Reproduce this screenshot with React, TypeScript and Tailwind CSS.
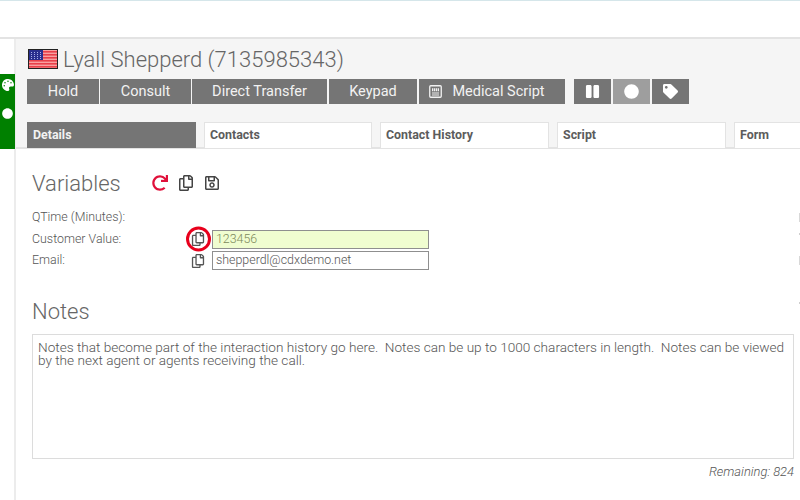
import { FaCircle, FaPalette, FaPause, FaRedo, FaRegCopy, FaRegSave, FaTag } from "react-icons/fa";

function Flag() {
  return (
    <svg width="30" height="20" viewBox="0 0 30 20" className="ml-[1px] shrink-0">
      <rect x="0.5" y="0.5" width="29" height="19" fill="#fff" stroke="#222" />
      <rect x="1" y="1" width="28" height="18" fill="#f8a0a0" />
      {[2, 5, 8, 11, 14, 17].map((y) => (
        <rect key={y} x="1" y={y} width="28" height="1.6" fill="#e8404a" />
      ))}
      <rect x="1" y="1" width="14" height="10" fill="#2a2f8f" />
      {[3, 5, 7, 9].map((y) =>
        [3, 6, 9, 12].map((x) => <rect key={`${x}-${y}`} x={x} y={y} width="1" height="1" fill="#aab0e8" />)
      )}
    </svg>
  );
}

function ScriptIcon() {
  return (
    <svg width="13" height="13" viewBox="0 0 13 13" fill="none" stroke="#f2f2f2" className="shrink-0">
      <rect x="0.75" y="0.75" width="11.5" height="11.5" rx="1" strokeWidth="1.3" />
      <path d="M3 4h7M3 5.5h7" strokeWidth="1.4" strokeDasharray="1.4 0.6" />
      <path d="M3 8h7M3 10h7" strokeWidth="1" />
    </svg>
  );
}

function ActionButton({ label, width, icon }: { label: string; width: string; icon?: boolean }) {
  return (
    <button className={`${width} flex h-[25px] shrink-0 items-center justify-center gap-[10px] bg-[#757575] text-[14.5px] text-[#f2f2f2]`}>
      {icon && <ScriptIcon />}
      {label}
    </button>
  );
}

function Tab({ label, width, active }: { label: string; width: string; active?: boolean }) {
  return (
    <div
      className={`${width} flex h-[26px] shrink-0 items-center text-[12.4px] font-bold ${
        active ? "bg-[#757575] px-[6px] text-[#f2f2f2]" : "border border-b-0 border-[#e3e3e3] bg-white px-[5px] text-[#5c5c5c]"
      }`}
    >
      {label}
    </div>
  );
}

function VarRow({ label, value, highlight, circled }: { label: string; value?: string; highlight?: boolean; circled?: boolean }) {
  return (
    <div className="flex h-[21.5px] items-center text-[12.4px] font-light text-[#555]">
      <span className="w-[155px]">{label}</span>
      {value && (
        <>
          <span className="relative flex w-[25px] justify-center pr-[4px] text-[14px] text-[#555]">
            <FaRegCopy />
            {circled && (
              <span className="absolute top-1/2 left-[-1.5px] h-[25px] w-[25px] -translate-y-1/2 rounded-full border-[3px] border-[#e8001c]" />
            )}
          </span>
          <div
            className={`flex h-[19px] w-[217px] items-center border border-[#8f8f8f] px-[3px] ${
              highlight ? "bg-[#f0fdd0] text-[#7d8a5c]" : "bg-white text-[#555]"
            }`}
          >
            {value}
          </div>
        </>
      )}
    </div>
  );
}

export default function App() {
  return (
    <div className="relative flex h-[500px] w-[800px] flex-col overflow-hidden bg-white font-['Roboto',sans-serif]">
      <div className="h-[39px] shrink-0 border-t border-b-2 border-t-[#d5e6ea] border-b-[#e3e3e3]" />
      <div className="flex min-h-0 flex-1">
        <div className="w-[16px] shrink-0 border-r-2 border-[#ececec]">
          <div className="mt-[35px] flex h-[75px] w-[15px] flex-col items-center gap-[17px] bg-[#008000] pt-[5px] text-white">
            <FaPalette className="text-[12px]" />
            <FaCircle className="text-[11px]" />
          </div>
        </div>
        <div className="min-w-0 flex-1">
          <div className="h-[110px] border-b-2 border-[#e3e3e3] bg-[#f5f5f5] pl-[11px]">
            <div className="flex h-[40px] items-center gap-[5px]">
              <Flag />
              <h1 className="text-[22px] font-light whitespace-nowrap text-[#666]">Lyall Shepperd (7135985343)</h1>
            </div>
            <div className="flex gap-[1px]">
              <ActionButton label="Hold" width="w-[72px]" />
              <ActionButton label="Consult" width="w-[91px]" />
              <ActionButton label="Direct Transfer" width="w-[135px]" />
              <ActionButton label="Keypad" width="ml-[1px] w-[88px]" />
              <ActionButton label="Medical Script" width="ml-[1px] w-[146px] pr-[10px]" icon />
              <button className="ml-[8px] flex h-[25px] w-[37px] items-center justify-center bg-[#757575] text-[15px] text-white">
                <FaPause />
              </button>
              <button className="ml-[1px] flex h-[25px] w-[37px] items-center justify-center bg-[#9e9e9e] text-[15px] text-white">
                <FaCircle />
              </button>
              <button className="ml-[1px] flex h-[25px] w-[37px] items-center justify-center bg-[#757575] text-[15px] text-white">
                <FaTag />
              </button>
            </div>
            <div className="mt-[18px] flex gap-[8px]">
              <Tab label="Details" width="w-[169px]" active />
              <Tab label="Contacts" width="w-[168px]" />
              <Tab label="Contact History" width="w-[169px]" />
              <Tab label="Script" width="w-[169px]" />
              <Tab label="Form" width="w-[100px]" />
            </div>
          </div>
          <div className="pt-[20px] pr-[6px] pl-[16px]">
            <div className="flex h-[28px] items-center">
              <h2 className="w-[120px] text-[22px] font-light text-[#666]">Variables</h2>
              <div className="flex items-center gap-[10px] text-[16px] text-[#444]">
                <FaRedo className="text-[16px] text-[#e0103a]" />
                <FaRegCopy />
                <FaRegSave />
              </div>
            </div>
            <div className="mt-[10px]">
              <VarRow label="QTime (Minutes):" />
              <VarRow label="Customer Value:" value="123456" highlight circled />
              <VarRow label="Email:" value="shepperdl@cdxdemo.net" />
            </div>
            <h2 className="mt-[26px] h-[28px] text-[22px] leading-[28px] font-light text-[#666]">Notes</h2>
            <div className="mt-[8px] h-[125px] border border-[#dcdcdc] px-[5px] pt-[6px] text-[13.6px] leading-[13px] font-light text-[#555]">
              Notes that become part of the interaction history go here.&nbsp; Notes can be up to 1000 characters in length.&nbsp; Notes can be viewed by the next agent or agents receiving the call.
            </div>
            <p className="mt-[3px] text-right text-[12.9px] font-light text-[#555] italic">Remaining: 824</p>
          </div>
        </div>
      </div>
      {/* clipped edge of the next column */}
      <span className="absolute top-[213px] right-0 h-[9px] w-px bg-[#d8d8d8]" />
      <span className="absolute top-[233px] right-0 h-[2px] w-px bg-[#cfcfcf]" />
      <span className="absolute top-[256px] right-0 h-[9px] w-px bg-[#d8d8d8]" />
      <span className="absolute top-[302px] right-0 h-[2px] w-px bg-[#cfcfcf]" />
    </div>
  );
}
